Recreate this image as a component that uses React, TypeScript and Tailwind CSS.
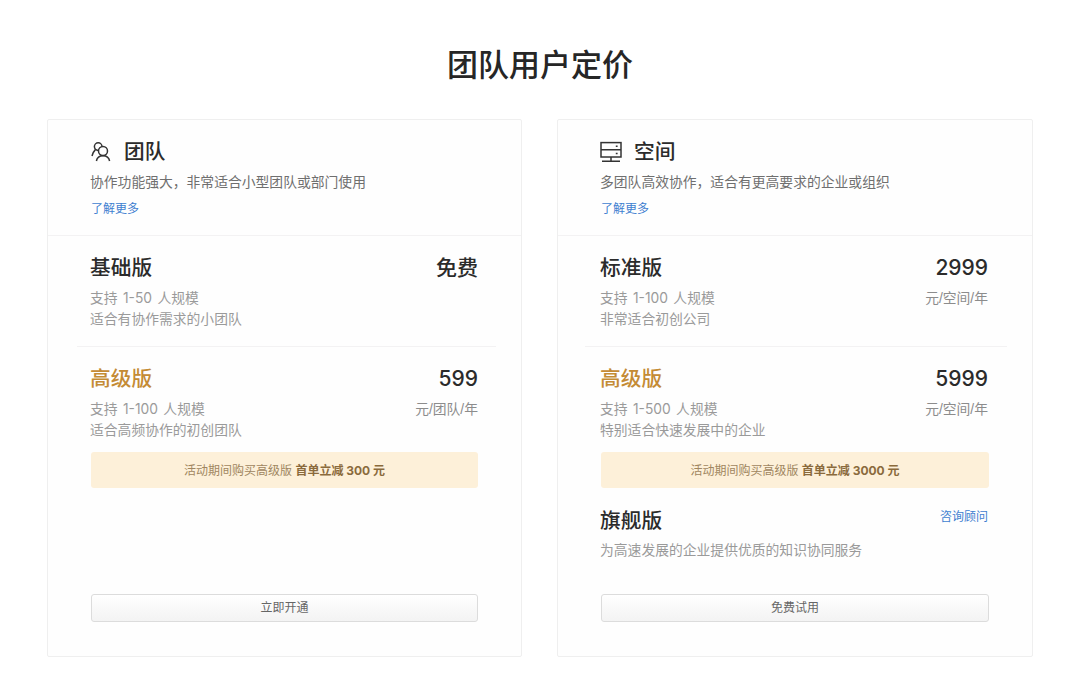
import type { ReactNode } from 'react'

const font = '[font-family:Inter,"Noto_Sans_CJK_SC",sans-serif]'

function TeamIcon() {
  return (
    <svg width="22" height="22" viewBox="0 0 22 22" fill="none" stroke="#333" strokeWidth="1.5">
      <circle cx="8.2" cy="5.6" r="3.8" />
      <path d="M5.4 8.6 C3.8 10.2 2.6 12.2 2 15" />
      <circle cx="13" cy="10" r="4.5" fill="#fefefe" />
      <path d="M6.4 20 C7 17 9 14.8 13 14.8 C17 14.8 19 17 19.6 20" />
    </svg>
  )
}

function SpaceIcon() {
  return (
    <svg width="22" height="22" viewBox="0 0 22 22" fill="none" stroke="#333" strokeWidth="1.5">
      <rect x="1" y="1.6" width="20" height="14.4" />
      <path d="M1 8.8h20M11 16v4M2 20.2h18" />
      <path d="M15.8 5.2h1.8M15.8 12.4h1.8" />
    </svg>
  )
}

function Plan(props: {
  name: string
  price: string
  unit?: string
  lines: string[]
  gold?: boolean
}) {
  return (
    <div className="flex justify-between">
      <div>
        <div className={`text-[20.7px] leading-[28px] font-medium ${props.gold ? 'text-[#c48b35]' : 'text-[#2b2b2b]'}`}>
          {props.name}
        </div>
        <div className="mt-[6px] text-[13.8px] leading-[21px] text-[#9a9a9a] [word-spacing:1.5px]">
          {props.lines.map((line) => (
            <div key={line}>{line}</div>
          ))}
        </div>
      </div>
      <div className="text-right">
        <div className="text-[21px] leading-[28px] font-medium text-[#2b2b2b]">{props.price}</div>
        {props.unit && (
          <div className='mt-[6px] text-[13.8px] leading-[21px] text-[#8c8c8c] [font-family:"Liberation_Sans","Noto_Sans_CJK_SC",sans-serif]'>
            {props.unit}
          </div>
        )}
      </div>
    </div>
  )
}

function Banner(props: { amount: string }) {
  return (
    <div className="ml-px mt-[11px] flex h-[36px] items-center justify-center rounded-[3px] bg-[#fdf0d9] pt-px text-[12px] text-[#a08660]">
      活动期间购买高级版&nbsp;
      <span className="font-bold text-[#8a6a3c]">首单立减 {props.amount} 元</span>
    </div>
  )
}

function Card(props: {
  icon: ReactNode
  title: string
  desc: string
  action: string
  wide?: boolean
  children: ReactNode
}) {
  return (
    <div className={`flex h-[538px] flex-col rounded-[2px] border border-[#efefef] bg-[#fefefe] ${props.wide ? 'w-[476px]' : 'w-[475px]'}`}>
      <div className="h-[116px] border-b border-[#f3f2f3] pl-[42px] pt-[18px]">
        <div className="flex h-[28px] items-center">
          <span className="w-[34px]">{props.icon}</span>
          <span className="text-[20.7px] font-medium text-[#2b2b2b]">{props.title}</span>
        </div>
        <div className="mt-[6px] text-[13.8px] leading-[20px] text-[#6f6f6f]">{props.desc}</div>
        <div className="ml-px mt-[8px] text-[12px] leading-[18px] text-[#3f7fd0]">了解更多</div>
      </div>
      <div className="flex flex-1 flex-col pb-[34px] pt-[18px]">
        {props.children}
        <div className="mx-[43px] mt-auto">
          <button className="h-[28px] w-full rounded-[3px] border border-[#dcdcdc] bg-linear-to-b from-white to-[#f3f3f3] text-[12px] text-[#666]">
            {props.action}
          </button>
        </div>
      </div>
    </div>
  )
}

export default function App() {
  return (
    <div className={`h-[677px] w-[1080px] overflow-hidden bg-white ${font}`}>
      <h1 className="pt-[42px] text-center text-[31px] leading-[46px] font-medium text-[#262626]">团队用户定价</h1>
      <div className="mt-[31px] flex justify-between pl-[47px] pr-[47px]">
        <Card icon={<TeamIcon />} title="团队" desc="协作功能强大，非常适合小型团队或部门使用" action="立即开通">
          <div className="ml-[42px] mr-[43px]">
            <Plan name="基础版" price="免费" lines={['支持 1-50 人规模', '适合有协作需求的小团队']} />
          </div>
          <div className="ml-[29px] mr-[25px] mt-[16px] border-t border-[#f3f2f3]" />
          <div className="ml-[42px] mr-[43px] mt-[18px]">
            <Plan name="高级版" gold price="599" unit="元/团队/年" lines={['支持 1-100 人规模', '适合高频协作的初创团队']} />
            <Banner amount="300" />
          </div>
        </Card>
        <Card wide icon={<SpaceIcon />} title="空间" desc="多团队高效协作，适合有更高要求的企业或组织" action="免费试用">
          <div className="ml-[42px] mr-[44px]">
            <Plan name="标准版" price="2999" unit="元/空间/年" lines={['支持 1-100 人规模', '非常适合初创公司']} />
          </div>
          <div className="ml-[27px] mr-[25px] mt-[16px] border-t border-[#f3f2f3]" />
          <div className="ml-[42px] mr-[43px] mt-[18px]">
            <div className="pr-px">
              <Plan name="高级版" gold price="5999" unit="元/空间/年" lines={['支持 1-500 人规模', '特别适合快速发展中的企业']} />
            </div>
            <Banner amount="3000" />
            <div className="mt-[19px] flex items-start justify-between pr-px">
              <div className="text-[20.7px] leading-[28px] font-medium text-[#2b2b2b]">旗舰版</div>
              <div className="text-[12px] leading-[20px] text-[#3f7fd0]">咨询顾问</div>
            </div>
            <div className="mt-[5px] text-[13.8px] leading-[21px] text-[#9a9a9a]">为高速发展的企业提供优质的知识协同服务</div>
          </div>
        </Card>
      </div>
    </div>
  )
}
